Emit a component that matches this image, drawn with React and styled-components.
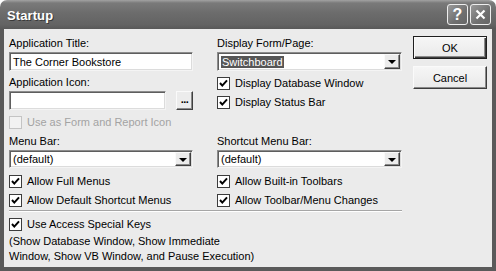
import React from 'react';
import styled, { createGlobalStyle } from 'styled-components';

const GlobalStyle = createGlobalStyle`
  html, body {
    margin: 0;
    padding: 0;
    background: #ffffff;
  }
  body {
    font-family: 'Liberation Sans', Arial, sans-serif;
    font-size: 11px;
    color: #000;
  }
`;

// whole dialog, fills the 496x271 page
const Window = styled.div`
  width: 496px;
  height: 271px;
  display: flex;
  flex-direction: column;
  box-sizing: border-box;
`;

const TitleBar = styled.div`
  height: 29px;
  flex: none;
  display: flex;
  align-items: center;
  padding: 0 5px 0 7px;
  border-radius: 7px 7px 0 0;
  background: linear-gradient(#a2a2a2 0px, #7a7a7a 3px, #6c6c6c 45%, #636363 85%, #585858 100%);
`;

const Title = styled.div`
  flex: 1;
  color: #fff;
  font-weight: bold;
  font-size: 13px;
  letter-spacing: 0.1px;
  text-shadow: 1px 1px 0 #3a3a3a;
  padding-top: 2px;
`;

const CapButton = styled.div`
  width: 19px;
  height: 19px;
  margin-left: 2px;
  border: 1px solid #eeeeee;
  border-radius: 3px;
  display: flex;
  align-items: center;
  justify-content: center;
  color: #fff;
  font-weight: bold;
  font-size: 16px;
  background: linear-gradient(135deg, #9a9a9a, #707070 60%, #666);
`;

const Body = styled.div`
  flex: 1;
  display: flex;
  background: #ebebeb;
  border: 4px solid #5a5a5a;
  border-top: none;
  padding: 7px 5px 0 5px;
`;

const Form = styled.div`
  width: 393px;
  display: flex;
  flex-direction: column;
`;

const Sections = styled.div`
  display: grid;
  grid-template-columns: 184px 185px;
  column-gap: 24px;
  row-gap: 4px;
`;

const Column = styled.div`
  display: flex;
  flex-direction: column;
`;

const Label = styled.div`
  height: 14px;
  line-height: 14px;
  margin-bottom: 2px;
`;

const Sunken = styled.div`
  box-sizing: border-box;
  height: ${(p) => p.h || 19}px;
  width: ${(p) => (p.w ? `${p.w}px` : '100%')};
  background: #fff;
  border: 1px solid;
  border-color: #8c8c8c #f4f4f4 #f4f4f4 #8c8c8c;
  box-shadow: inset 1px 1px 0 #5e5e5e, inset -1px -1px 0 #dcdcdc;
  display: flex;
  align-items: center;
  padding: 0 2px 0 2px;
  margin-bottom: ${(p) => p.mb || 0}px;
`;

const FieldText = styled.span`
  flex: 1;
  white-space: nowrap;
  line-height: 14px;
  padding-left: 1px;
`;

const Selected = styled.span`
  background: #565656;
  color: #fff;
  line-height: 14px;
  padding: 0 1px;
`;

const DropButton = styled.div`
  width: 16px;
  height: calc(100% - 2px);
  box-sizing: border-box;
  background: #ececec;
  border: 1px solid;
  border-color: #fafafa #404040 #404040 #fafafa;
  box-shadow: inset -1px -1px 0 #8a8a8a;
  display: flex;
  align-items: center;
  justify-content: center;
  margin-right: -1px;
`;

const Arrow = styled.div`
  width: 0;
  height: 0;
  border-left: 4px solid transparent;
  border-right: 4px solid transparent;
  border-top: 4px solid #000;
  margin-top: 1px;
`;

const IconRow = styled.div`
  display: flex;
  align-items: center;
  justify-content: space-between;
  margin-bottom: 4px;
`;

const SmallButton = styled.div`
  width: 17px;
  height: 19px;
  box-sizing: border-box;
  background: #ececec;
  border: 1px solid;
  border-color: #fafafa #404040 #404040 #fafafa;
  box-shadow: inset -1px -1px 0 #8a8a8a;
  display: flex;
  align-items: center;
  justify-content: center;
  font-weight: bold;
  letter-spacing: -0.5px;
  line-height: 8px;
  padding-bottom: 3px;
`;

const CheckRow = styled.div`
  height: 16px;
  display: flex;
  align-items: center;
  margin-top: ${(p) => p.mt || 0}px;
  color: ${(p) => (p.disabled ? '#a3a3a3' : '#000')};
`;

const Box = styled.div`
  width: 13px;
  height: 13px;
  box-sizing: border-box;
  border: 1px solid ${(p) => (p.disabled ? '#c4c4c4' : '#3c3c3c')};
  background: ${(p) => (p.disabled ? '#f2f2f2' : '#fff')};
  margin-right: 5px;
  display: flex;
  align-items: center;
  justify-content: center;
`;

const Separator = styled.div`
  height: 1px;
  margin: 2px 0 4px 0;
  background: #a6a6a6;
  border-bottom: 1px solid #fff;
`;

const Note = styled.div`
  line-height: 15px;
  margin-top: 2px;
`;

const Buttons = styled.div`
  margin-left: 11px;
  display: flex;
  flex-direction: column;
  gap: 7px;
`;

const Button = styled.div`
  width: 74px;
  height: 23px;
  box-sizing: border-box;
  background: linear-gradient(#f6f6f6, #e9e9e9);
  border: 1px solid;
  border-color: ${(p) => (p.primary ? '#1e1e1e' : '#fafafa #3c3c3c #3c3c3c #fafafa')};
  box-shadow: ${(p) =>
    p.primary
      ? 'inset 1px 1px 0 #fafafa, inset -1px -1px 0 #3c3c3c, inset -2px -2px 0 #8a8a8a'
      : 'inset -1px -1px 0 #8a8a8a'};
  display: flex;
  align-items: center;
  justify-content: center;
`;

const Check = ({ checked, disabled }) => (
  <Box disabled={disabled}>
    {checked && (
      <svg width="9" height="9" viewBox="0 0 9 9">
        <polyline points="1,4 3.3,6.6 8,1.4" fill="none" stroke="#000" strokeWidth="2" />
      </svg>
    )}
  </Box>
);

const CheckItem = ({ label, checked = true, disabled, mt }) => (
  <CheckRow disabled={disabled} mt={mt}>
    <Check checked={checked} disabled={disabled} />
    {label}
  </CheckRow>
);

const Combo = ({ children, h }) => (
  <Sunken h={h} mb={4}>
    <FieldText>{children}</FieldText>
    <DropButton>
      <Arrow />
    </DropButton>
  </Sunken>
);

export default function App() {
  return (
    <Window>
      <GlobalStyle />
      <TitleBar>
        <Title>Startup</Title>
        <CapButton>?</CapButton>
        <CapButton>
          <svg width="11" height="11" viewBox="0 0 11 11">
            <path d="M1.5 1.5 L9.5 9.5 M9.5 1.5 L1.5 9.5" stroke="#fff" strokeWidth="2.2" />
          </svg>
        </CapButton>
      </TitleBar>
      <Body>
        <Form>
          <Sections>
            <Column>
              <Label>Application Title:</Label>
              <Sunken mb={4}>
                <FieldText>The Corner Bookstore</FieldText>
              </Sunken>
              <Label>Application Icon:</Label>
              <IconRow>
                <Sunken w={157} />
                <SmallButton>...</SmallButton>
              </IconRow>
              <CheckItem label="Use as Form and Report Icon" checked={false} disabled />
            </Column>
            <Column>
              <Label>Display Form/Page:</Label>
              <Combo>
                <Selected>Switchboard</Selected>
              </Combo>
              <CheckItem label="Display Database Window" />
              <CheckItem label="Display Status Bar" mt={3} />
            </Column>
            <Column>
              <Label>Menu Bar:</Label>
              <Combo h={18}>(default)</Combo>
              <CheckItem label="Allow Full Menus" mt={1} />
              <CheckItem label="Allow Default Shortcut Menus" mt={3} />
            </Column>
            <Column>
              <Label>Shortcut Menu Bar:</Label>
              <Combo h={18}>(default)</Combo>
              <CheckItem label="Allow Built-in Toolbars" mt={1} />
              <CheckItem label="Allow Toolbar/Menu Changes" mt={3} />
            </Column>
          </Sections>
          <Separator />
          <CheckItem label="Use Access Special Keys" />
          <Note>
            (Show Database Window, Show Immediate
            <br />
            Window, Show VB Window, and Pause Execution)
          </Note>
        </Form>
        <Buttons>
          <Button primary>OK</Button>
          <Button>Cancel</Button>
        </Buttons>
      </Body>
    </Window>
  );
}
